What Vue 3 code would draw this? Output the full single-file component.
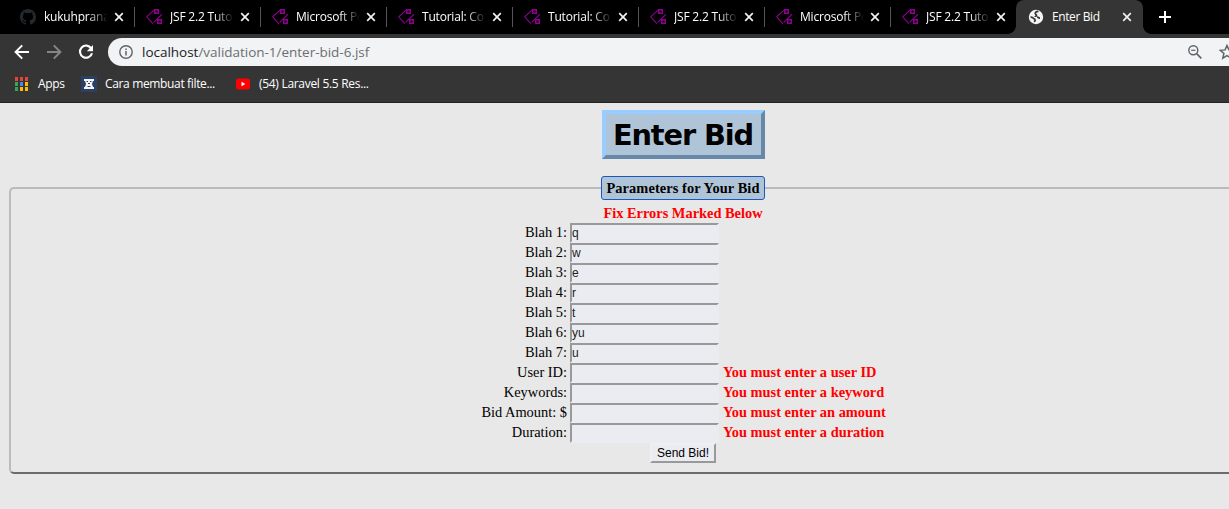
<script setup>
const tabs = [
  { title: 'kukuhprana', icon: 'github' },
  { title: 'JSF 2.2 Tuto', icon: 'code' },
  { title: 'Microsoft Po', icon: 'code' },
  { title: 'Tutorial: Co', icon: 'code' },
  { title: 'Tutorial: Co', icon: 'code' },
  { title: 'JSF 2.2 Tuto', icon: 'code' },
  { title: 'Microsoft Po', icon: 'code' },
  { title: 'JSF 2.2 Tuto', icon: 'code' },
  { title: 'Enter Bid', icon: 'globe', active: true }
]
const appDots = ['#ea4335', '#ea4335', '#ea4335', '#34a853', '#4285f4', '#fbbc05', '#34a853', '#fbbc05', '#fbbc05']
const rows = [
  { label: 'Blah 1:', value: 'q' },
  { label: 'Blah 2:', value: 'w' },
  { label: 'Blah 3:', value: 'e' },
  { label: 'Blah 4:', value: 'r' },
  { label: 'Blah 5:', value: 't' },
  { label: 'Blah 6:', value: 'yu' },
  { label: 'Blah 7:', value: 'u' },
  { label: 'User ID:', value: '', error: 'You must enter a user ID' },
  { label: 'Keywords:', value: '', error: 'You must enter a keyword' },
  { label: 'Bid Amount: $', value: '', error: 'You must enter an amount' },
  { label: 'Duration:', value: '', error: 'You must enter a duration' }
]
</script>

<template>
  <div class="window">
    <header class="chrome">
      <div class="tabs">
        <div v-for="(t, i) in tabs" :key="i" class="tab" :class="{ active: t.active, last: i === 7 }">
          <svg v-if="t.icon === 'github'" class="fav" viewBox="0 0 16 16"><path fill="#24292e" d="M8 0C3.58 0 0 3.58 0 8c0 3.54 2.29 6.53 5.47 7.59.4.07.55-.17.55-.38 0-.19-.01-.82-.01-1.49-2.01.37-2.53-.49-2.69-.94-.09-.23-.48-.94-.82-1.13-.28-.15-.68-.52-.01-.53.63-.01 1.08.58 1.23.82.72 1.21 1.87.87 2.33.66.07-.52.28-.87.51-1.07-1.78-.2-3.64-.89-3.64-3.95 0-.87.31-1.59.82-2.15-.08-.2-.36-1.02.08-2.12 0 0 .67-.21 2.2.82a7.6 7.6 0 0 1 4 0c1.53-1.04 2.2-.82 2.2-.82.44 1.1.16 1.92.08 2.12.51.56.82 1.27.82 2.15 0 3.07-1.87 3.75-3.65 3.95.29.25.54.73.54 1.48 0 1.07-.01 1.93-.01 2.2 0 .21.15.46.55.38A8 8 0 0 0 16 8c0-4.42-3.58-8-8-8z" /></svg>
          <svg v-else-if="t.icon === 'code'" class="fav" viewBox="0 0 16 16" fill="none" stroke="#900090">
            <path d="M8 1.200L.700 7.800L6.800 14.600M16 5.200L7.600 13.400" stroke-width="1.100" />
            <path d="M8.750 .750h3.500v3.500h-3.500zM11.750 10.750h3.500v3.500h-3.500z" stroke-width="1.500" />
          </svg>
          <svg v-else class="fav" viewBox="0 0 16 16"><circle cx="8" cy="8" r="7.200" fill="#f4f4f4" /><path d="M10.500 2.500C8.500 2.300 7 3.200 7.300 4.600c.2 1 1.500.9 1.200 2-.3.900-1.200.5-1.300 1.400M2.500 8.200c1.200-.2 2.300.3 2.900 1.100.7 1 1.900.6 1.700 1.800-.1.700-.600 1-.500 2M9 8.200c1.600-.2 1.800.900 3 .9" fill="none" stroke="#353535" stroke-width="1.700" /></svg>
          <span class="title">{{ t.title }}</span>
          <svg class="close" viewBox="0 0 10 10"><path d="M1.200 1.200l7.600 7.600M8.800 1.200L1.200 8.800" stroke="#f1f1f1" stroke-width="1.700" /></svg>
        </div>
        <svg class="plus" viewBox="0 0 12 12"><path d="M6 0v12M0 6h12" stroke="#fff" stroke-width="2" /></svg>
      </div>
      <div class="toolbar">
        <svg class="nav" viewBox="0 0 16 16" fill="none" stroke="#fff" stroke-width="2"><path d="M15 8H2M8.200 1.400L1.600 8l6.600 6.600" /></svg>
        <svg class="nav" viewBox="0 0 16 16" fill="none" stroke="#868686" stroke-width="2"><path d="M1 8h13M7.800 1.400L14.400 8l-6.600 6.600" /></svg>
        <svg class="nav" viewBox="0 0 16 16"><path d="M13.200 4.300A6.100 6.100 0 1 0 14 9.300" fill="none" stroke="#fff" stroke-width="2.100" /><path d="M15 1v6.200H8.800z" fill="#fff" /></svg>
        <div class="address">
          <svg class="info" viewBox="0 0 14 14"><circle cx="7" cy="7" r="6.200" fill="none" stroke="#5f6368" stroke-width="1.400" /><path d="M7 6v4.400M7 3.400v1.500" stroke="#5f6368" stroke-width="1.500" /></svg>
          <span class="url"><b>localhost</b>/validation-1/enter-bid-6.jsf</span>
          <svg class="lens" viewBox="0 0 14 14" fill="none" stroke="#5f6368"><circle cx="5.300" cy="5.300" r="4.500" stroke-width="1.400" /><path d="M8.500 8.500l4.800 4.800" stroke-width="1.700" /><path d="M3.200 5.300h4.200" stroke-width="1.200" /></svg>
          <svg class="star" viewBox="0 0 16 16"><path d="M8 1.500l1.900 4.400 4.800.4-3.600 3.200 1.100 4.700L8 11.700l-4.200 2.500 1.100-4.700-3.600-3.200 4.800-.4z" fill="none" stroke="#5f6368" stroke-width="1.500" /></svg>
        </div>
      </div>
      <div class="bookmarks">
        <span class="apps"><i v-for="(c, i) in appDots" :key="i" :style="{ background: c }"></i></span>
        <span class="bm b1">Apps</span>
        <svg class="flask" viewBox="0 0 16 16"><rect width="16" height="16" fill="#2a4066" /><path d="M3 3h10v2h-1l-1 3 1 3h1v2H3v-2h1l1-3-1-3H3z" fill="#f4f4f4" /><path d="M5.500 5.500h1.500M9 5.500h1.500M6.500 10.500h3M7 7.500h2" stroke="#2a4066" /></svg>
        <span class="bm b2">Cara membuat filte...</span>
        <svg class="yt" viewBox="0 0 14 12"><rect y=".5" width="14" height="11" rx="2.500" fill="#f00" /><path d="M5.500 3.800v4.400L9.300 6z" fill="#fff" /></svg>
        <span class="bm b3">(54) Laravel 5.5 Res...</span>
      </div>
    </header>
    <main class="page">
      <h1>Enter Bid</h1>
      <fieldset>
        <legend>Parameters for Your Bid</legend>
        <form @submit.prevent>
          <div class="summary">Fix Errors Marked Below</div>
          <div v-for="r in rows" :key="r.label" class="row">
            <label>{{ r.label }}</label>
            <input type="text" :value="r.value" :aria-label="r.label" />
            <span class="error">{{ r.error }}</span>
          </div>
          <button>Send Bid!</button>
        </form>
      </fieldset>
    </main>
  </div>
</template>

<style>
body { background: #e8e8e8; overflow: hidden; }
</style>

<style scoped>
* { box-sizing: border-box; }
svg { display: block; flex: none; }
.window { width: 1229px; height: 509px; overflow: hidden; background: #e8e8e8; }
.chrome { height: 103px; background: #353535; border-bottom: 1px solid #222; font: 12px/16px "Open Sans", sans-serif; color: #fff; }
.tabs { height: 34px; background: #000; display: flex; align-items: center; padding-left: 9px; }
.tab { position: relative; width: 126px; height: 34px; flex: none; display: flex; align-items: center; padding-left: 11px; }
.tab:not(.active):not(.last)::after { content: ""; position: absolute; right: 0; top: 7px; width: 1px; height: 20px; background: #555; }
.tab.active { background: #353535; border-radius: 8px 8px 0 0; width: 127px; margin-left: -1px; padding-left: 12px; }
.tab.active::before, .tab.active::after { content: ""; position: absolute; bottom: 0; width: 8px; height: 8px; }
.tab.active::before { left: -8px; background: radial-gradient(circle at 0 0, #000 7.500px, #353535 8px); }
.tab.active::after { right: -8px; background: radial-gradient(circle at 100% 0, #000 7.500px, #353535 8px); }
.fav { width: 16px; height: 16px; }
.title { width: 64px; margin-left: 8px; white-space: nowrap; letter-spacing: -.2px; mask-image: linear-gradient(to right, #000 68%, transparent); }
.active .title { mask-image: none; letter-spacing: -.4px; }
.close { width: 10px; height: 10px; margin-left: 6px; }
.plus { width: 12px; height: 12px; margin-left: 16px; }
.toolbar { height: 36px; display: flex; align-items: center; padding-left: 14px; }
.nav { width: 16px; height: 16px; margin-right: 16px; }
.address { width: 1200px; flex: none; height: 28px; margin-left: -2px; border-radius: 14px; background: #f1f3f4; display: flex; align-items: center; padding-left: 11px; }
.info { width: 14px; height: 14px; }
.url { width: 1046px; margin-left: 9px; font-size: 13.500px; letter-spacing: -.02px; line-height: 20px; color: #6b6f73; }
.url b { font-weight: 400; color: #202124; }
.lens { width: 14px; height: 14px; }
.star { width: 16px; height: 16px; margin-left: 17px; }
.bookmarks { height: 28px; display: flex; align-items: center; padding-left: 15px; white-space: nowrap; }
.apps { display: grid; grid-template-columns: repeat(3, 3px); gap: 1px 2px; }
.apps i { height: 4px; }
.bm { letter-spacing: -.3px; }
.b1 { width: 43px; margin-left: 10px; }
.flask { width: 16px; height: 16px; }
.b2 { width: 123px; margin-left: 8px; letter-spacing: -.35px; }
.yt { width: 14px; height: 12px; margin-left: 8px; }
.b3 { margin-left: 9px; }
.page { width: 1366px; padding: 7px 9px 0; display: flex; flex-direction: column; align-items: center; font: 14.400px/20px "Liberation Serif", serif; color: #000; }
h1 { margin: 0 0 17px; width: 163px; height: 49px; border: 4px solid; border-color: #99ccff #6689a9 #6689a9 #99ccff; background: #b0c4d8; font: bold 28.800px/43px "DejaVu Sans", sans-serif; letter-spacing: -1.100px; text-align: center; white-space: nowrap; }
fieldset { width: 1348px; height: 298px; margin: 0; padding: 4px 0 0; border: 2px solid; border-color: #bbb #6c6c6c #6c6c6c #bbb; border-radius: 5px; }
legend { margin: 0 auto; padding: 0; width: 164px; height: 24px; border: 1px solid #1c57c0; border-radius: 3px; background: #b0c4d8; font-weight: bold; line-height: 22px; letter-spacing: .08px; text-align: center; white-space: nowrap; }
form { width: 406px; margin: 0 auto; display: flex; flex-direction: column; }
.summary { height: 19px; line-height: 19px; text-align: center; color: #f00; font-weight: bold; }
.row { height: 20px; display: grid; grid-template-columns: 87px 149px 163px; column-gap: 3px; }
label { text-align: right; line-height: 18px; white-space: nowrap; }
input { width: 149px; height: 20px; margin: 0; padding: 0; border: 2px solid; border-color: #999 #ebecf2 #ebecf2 #999; background: #ebecf2; font: 12px/16px "Liberation Sans", sans-serif; color: #222; }
.error { margin-left: 1px; color: #f00; font-weight: bold; line-height: 18px; white-space: nowrap; }
button { width: 66px; height: 20px; margin-left: 170px; padding: 0; border: 2px solid; border-color: #eeeff4 #999 #999 #eeeff4; background: #ebecf2; font: 12px/16px "Liberation Sans", sans-serif; color: #000; white-space: nowrap; }
</style>
